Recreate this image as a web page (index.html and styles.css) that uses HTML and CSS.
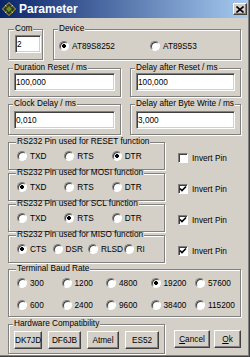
FILE: index.html
```html
<!DOCTYPE html>
<html lang="en">
<head>
    <meta charset="UTF-8">
    <title>Parameter</title>
    <link rel="stylesheet" href="styles.css">
</head>
<body>
    <div class="window">
        <!-- Title bar -->
        <div class="titlebar">
            <svg class="app-icon" width="14" height="14" viewBox="0 0 14 14">
                <path d="M7 0.5 L13.5 7 L7 13.5 L0.5 7 Z" fill="#2b3a1c" stroke="#c8b040" stroke-width="1"/>
                <path d="M4 7 L7 4 L10 7 L7 10 Z" fill="#6f8a2a"/>
                <path d="M3 3 L4.5 4.5 M11 3 L9.5 4.5 M3 11 L4.5 9.5 M11 11 L9.5 9.5" stroke="#e0d070" stroke-width="1"/>
            </svg>
            <span class="title">Parameter</span>
            <span class="close-btn">
                <svg width="8" height="7" viewBox="0 0 8 7">
                    <path d="M0.5 0.5 L7.5 6.5 M7.5 0.5 L0.5 6.5" stroke="#000" stroke-width="1.6"/>
                </svg>
            </span>
        </div>

        <div class="content">
            <div class="row row-top">
                <fieldset class="grp grp-com">
                    <legend>Com</legend>
                    <input class="field field-com" type="text" value="2">
                </fieldset>
                <fieldset class="grp grp-device">
                    <legend>Device</legend>
                    <div class="opts">
                        <label class="opt opt-device"><input type="radio" name="device" checked>AT89S8252</label>
                        <label class="opt"><input type="radio" name="device">AT89S53</label>
                    </div>
                </fieldset>
            </div>

            <div class="row row-delay">
                <fieldset class="grp grp-left">
                    <legend>Duration Reset / ms</legend>
                    <input class="field" type="text" value="100,000">
                </fieldset>
                <fieldset class="grp grp-right">
                    <legend>Delay after Reset / ms</legend>
                    <input class="field" type="text" value="100,000">
                </fieldset>
            </div>

            <div class="row row-clock">
                <fieldset class="grp grp-left">
                    <legend>Clock Delay / ms</legend>
                    <input class="field" type="text" value="0,010">
                </fieldset>
                <fieldset class="grp grp-right">
                    <legend>Delay after Byte Write / ms</legend>
                    <input class="field" type="text" value="3,000">
                </fieldset>
            </div>

            <div class="row pin-row pin-first">
                <fieldset class="grp grp-pin">
                    <legend>RS232 Pin used for RESET function</legend>
                    <div class="opts">
                        <label class="opt opt-pin"><input type="radio" name="reset">TXD</label>
                        <label class="opt opt-pin"><input type="radio" name="reset">RTS</label>
                        <label class="opt opt-pin"><input type="radio" name="reset" checked>DTR</label>
                    </div>
                </fieldset>
                <label class="chk"><span class="box"></span>Invert Pin</label>
            </div>

            <div class="row pin-row">
                <fieldset class="grp grp-pin">
                    <legend>RS232 Pin used for MOSI function</legend>
                    <div class="opts">
                        <label class="opt opt-pin"><input type="radio" name="mosi" checked>TXD</label>
                        <label class="opt opt-pin"><input type="radio" name="mosi">RTS</label>
                        <label class="opt opt-pin"><input type="radio" name="mosi">DTR</label>
                    </div>
                </fieldset>
                <label class="chk"><span class="box"><svg width="8" height="8" viewBox="0 0 8 8"><path d="M1 3.5 L3 5.5 L7 1.5" stroke="#000" stroke-width="1.6" fill="none"/></svg></span>Invert Pin</label>
            </div>

            <div class="row pin-row">
                <fieldset class="grp grp-pin">
                    <legend>RS232 Pin used for SCL function</legend>
                    <div class="opts">
                        <label class="opt opt-pin"><input type="radio" name="scl">TXD</label>
                        <label class="opt opt-pin"><input type="radio" name="scl" checked>RTS</label>
                        <label class="opt opt-pin"><input type="radio" name="scl">DTR</label>
                    </div>
                </fieldset>
                <label class="chk"><span class="box"><svg width="8" height="8" viewBox="0 0 8 8"><path d="M1 3.5 L3 5.5 L7 1.5" stroke="#000" stroke-width="1.6" fill="none"/></svg></span>Invert Pin</label>
            </div>

            <div class="row pin-row">
                <fieldset class="grp grp-pin">
                    <legend>RS232 Pin used for MISO function</legend>
                    <div class="opts">
                        <label class="opt opt-miso"><input type="radio" name="miso" checked>CTS</label>
                        <label class="opt opt-miso"><input type="radio" name="miso">DSR</label>
                        <label class="opt opt-miso"><input type="radio" name="miso">RLSD</label>
                        <label class="opt opt-miso"><input type="radio" name="miso">RI</label>
                    </div>
                </fieldset>
                <label class="chk"><span class="box"><svg width="8" height="8" viewBox="0 0 8 8"><path d="M1 3.5 L3 5.5 L7 1.5" stroke="#000" stroke-width="1.6" fill="none"/></svg></span>Invert Pin</label>
            </div>

            <fieldset class="grp grp-baud">
                <legend>Terminal Baud Rate</legend>
                <div class="baud-grid">
                    <label class="opt"><input type="radio" name="baud">300</label>
                    <label class="opt"><input type="radio" name="baud">1200</label>
                    <label class="opt"><input type="radio" name="baud">4800</label>
                    <label class="opt"><input type="radio" name="baud" checked>19200</label>
                    <label class="opt"><input type="radio" name="baud">57600</label>
                    <label class="opt"><input type="radio" name="baud">600</label>
                    <label class="opt"><input type="radio" name="baud">2400</label>
                    <label class="opt"><input type="radio" name="baud">9600</label>
                    <label class="opt"><input type="radio" name="baud">38400</label>
                    <label class="opt"><input type="radio" name="baud">115200</label>
                </div>
            </fieldset>

            <div class="row row-bottom">
                <fieldset class="grp grp-hw">
                    <legend>Hardware Compatibility</legend>
                    <div class="hw-buttons">
                        <button class="btn btn-dk">DK7JD</button>
                        <button class="btn btn-df">DF6JB</button>
                        <button class="btn btn-atmel">Atmel</button>
                        <button class="btn btn-es">ES52</button>
                    </div>
                </fieldset>
                <div class="actions">
                    <button class="btn btn-cancel"><u>C</u>ancel</button>
                    <button class="btn btn-ok"><u>O</u>k</button>
                </div>
            </div>
        </div>
    </div>
</body>
</html>
```

FILE: styles.css
```css
body {
    margin: 0;
    font-family: "Liberation Sans", Arial, sans-serif;
    font-size: 8.25px;
    color: #000;
    background: #d4d0c8;
}

/* Window frame */
.window {
    width: 250px;
    height: 357px;
    box-sizing: border-box;
    overflow: hidden;
    background: #d4d0c8;
    border-right: 1px solid #404040;
    border-bottom: 1px solid #404040;
    box-shadow: inset -1px -1px 0 #808080;
}

.titlebar {
    height: 18px;
    margin-right: 1px;
    padding-left: 2px;
    display: flex;
    align-items: center;
    background: linear-gradient(to right, #0a246a, #a6caf0);
}

.app-icon {
    flex: none;
}

.title {
    margin-left: 3px;
    color: #fff;
    font-size: 12px;
    font-weight: bold;
}

.close-btn {
    margin-left: auto;
    margin-right: 1px;
    width: 14px;
    height: 12px;
    box-sizing: border-box;
    display: flex;
    align-items: center;
    justify-content: center;
    background: #d4d0c8;
    border: 1px solid;
    border-color: #fff #404040 #404040 #fff;
    box-shadow: inset -1px -1px 0 #808080;
}

.content {
    padding: 0 8px;
}

/* Group boxes */
.grp {
    margin: 0;
    padding: 2px 5px 5px;
    min-width: 0;
    box-sizing: border-box;
    border: 1px solid #808080;
    box-shadow: inset 1px 1px 0 #fff, 1px 1px 0 #fff;
}

.grp legend {
    margin-left: -1px;
    padding: 0 1px;
    line-height: 6px;
    white-space: nowrap;
    background: #d4d0c8;
}

.row {
    display: flex;
}

.row-top {
    margin-top: 8px;
}

.row-delay {
    margin-top: 5px;
}

.row-clock {
    margin-top: 4px;
}

.row-clock .grp {
    padding-top: 4px;
}

.grp-com {
    width: 35px;
    padding: 3px 5px 6px 6px;
}

.grp-device {
    flex: 1;
    margin-left: 10px;
    padding: 5px 5px 4px;
}

.grp-left {
    width: 113px;
}

.grp-right {
    flex: 1;
    margin-left: 9px;
}

/* Text fields */
.field {
    display: block;
    width: 100%;
    height: 18px;
    margin: 0;
    padding: 0 1px;
    box-sizing: border-box;
    font: inherit;
    color: #000;
    background: #fff;
    border: 1px solid;
    border-color: #808080 #fff #fff #808080;
    box-shadow: inset 1px 1px 0 #404040, inset -1px -1px 0 #d4d0c8;
    outline: none;
}

.field-com {
    width: 26px;
}

/* Radio options */
.opts {
    display: flex;
    height: 18px;
}

.opt {
    display: flex;
    align-items: center;
    gap: 3px;
    white-space: nowrap;
}

.opt input {
    appearance: none;
    flex: none;
    width: 10px;
    height: 10px;
    margin: 0;
    border-radius: 50%;
    border: 1px solid;
    border-color: #808080 #fff #fff #808080;
    box-shadow: inset 1px 1px 0 #404040;
    background: #fff;
}

.opt input:checked {
    background: radial-gradient(circle, #000 0 1.6px, #fff 2.2px);
}

.opt-device {
    width: 91px;
}

.pin-row {
    align-items: flex-start;
}

.pin-first {
    margin-top: 4px;
}

.grp-pin {
    width: 157px;
    padding: 3px 5px 5px 8px;
}

.grp-pin .opts {
    height: 16px;
}

.opt-pin {
    width: 49px;
}

.opt-miso {
    width: 37px;
}

/* Checkbox */
.chk {
    display: flex;
    align-items: center;
    gap: 4px;
    height: 10px;
    margin-top: 14px;
    margin-left: 13px;
    white-space: nowrap;
}

.box {
    width: 10px;
    height: 10px;
    box-sizing: border-box;
    display: flex;
    align-items: center;
    justify-content: center;
    background: #fff;
    border: 1px solid;
    border-color: #808080 #fff #fff #808080;
    box-shadow: inset 1px 1px 0 #404040;
}

/* Baud rate */
.grp-baud {
    width: 100%;
    margin-top: 3px;
    padding: 3px 5px 3px 8px;
}

.baud-grid {
    display: grid;
    grid-template-columns: repeat(5, 44.5px);
    grid-auto-rows: 16px;
    row-gap: 6px;
}

/* Bottom row */
.row-bottom {
    margin-top: 4px;
}

.grp-hw {
    width: 157px;
    padding: 4px 5px;
}

.hw-buttons {
    display: flex;
    justify-content: space-between;
}

.btn {
    height: 18px;
    margin: 0;
    padding: 0;
    box-sizing: border-box;
    font: inherit;
    color: #000;
    background: #d4d0c8;
    border: 1px solid;
    border-color: #fff #404040 #404040 #fff;
    box-shadow: inset -1px -1px 0 #808080;
}

.btn-dk { width: 28px; }
.btn-df { width: 33px; }
.btn-atmel { width: 32px; }
.btn-es { width: 34px; }

.actions {
    display: flex;
    gap: 4px;
    margin-left: auto;
    margin-bottom: 6px;
    align-self: flex-end;
}

.btn-cancel { width: 36px; }
.btn-ok { width: 27px; }
```
